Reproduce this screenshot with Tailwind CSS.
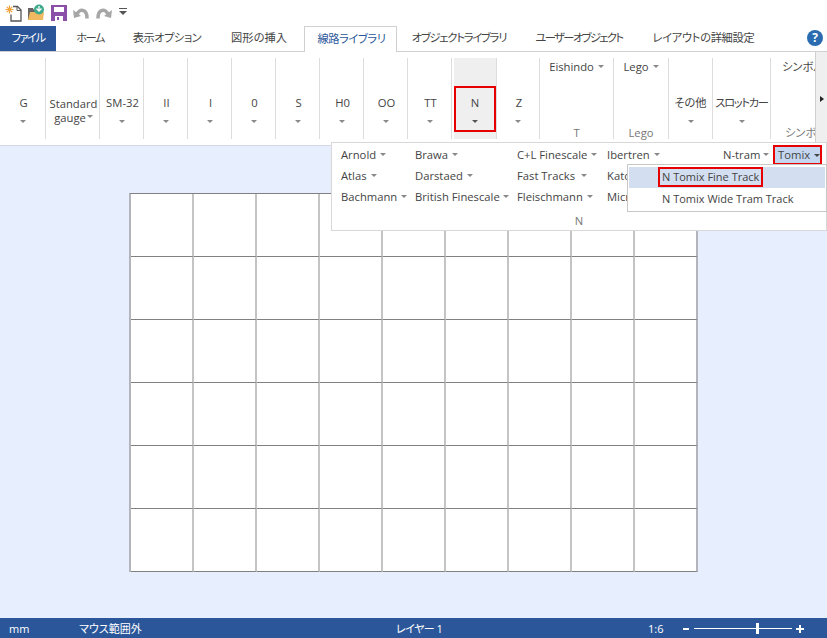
<!DOCTYPE html>
<html lang="ja">
<head>
    <meta charset="UTF-8">
    <title>線路ライブラリ</title>
    <script src="https://cdn.jsdelivr.net/npm/@tailwindcss/browser@4"></script>
</head>
<body class="bg-white">
<div class="relative w-[827px] h-[638px] overflow-hidden flex flex-col bg-white text-[11.25px] text-[#444] [font-feature-settings:'palt'] font-['Open_Sans','Noto_Sans_CJK_JP',sans-serif]">

    <!-- quick access -->
    <div class="h-[26px] flex items-center pl-[5px]">
        <svg width="17" height="17" viewBox="0 0 17 17" fill="none">
            <path d="M8 1.500h4.500l3.500 3.500v11H6V9.500" stroke="#555" stroke-width="1.300"/>
            <path d="M12 1.500v4h4" stroke="#555"/>
            <path d="M4.500 0.500v8M0.500 4.500h8M1.800 1.800l5.400 5.400M7.200 1.800L1.800 7.200" stroke="#f0a23c" stroke-width="1.200"/>
        </svg>
        <svg width="18" height="18" viewBox="0 0 18 18" class="ml-[5px]">
            <path d="M1 4h5l1 2h2v10H1z" fill="#666"/>
            <path d="M3 8h14l-1 8H1z" fill="#f0b860"/>
            <circle cx="12" cy="5.500" r="5" fill="#3fa98c"/>
            <path d="M9.500 4.500l2.500 2.500 2.500-2.500M12 2v5" stroke="#fff" stroke-width="1.300" fill="none"/>
        </svg>
        <svg width="16" height="16" viewBox="0 0 16 16" class="ml-[6px]">
            <path d="M0 0h16v16H0z" fill="#8a4fa8"/>
            <path d="M3 2h10v5H3z" fill="#fff"/>
            <path d="M4 11h8v5H4z" fill="#fff"/>
            <path d="M6 12h2v3H6z" fill="#8a4fa8"/>
        </svg>
        <svg width="16" height="13" viewBox="0 0 16 13" fill="none" class="ml-[6px] mt-[1px]">
            <path d="M4 8C5 4 8 3 10 3.500c3 .5 4 3 4 8" stroke="#a6a6a6" stroke-width="3.500"/>
            <path d="M0 3l1 8 7-2z" fill="#a6a6a6"/>
        </svg>
        <svg width="16" height="13" viewBox="0 0 16 13" fill="none" class="ml-[7px] mt-[1px]">
            <path d="M12 8C11 4 8 3 6 3.500c-3 .5-4 3-4 8" stroke="#a6a6a6" stroke-width="3.500"/>
            <path d="M16 3l-1 8-7-2z" fill="#a6a6a6"/>
        </svg>
        <svg width="8" height="7" viewBox="0 0 8 7" class="ml-[7px] -mt-[3px]">
            <path d="M0 0h8v1H0z" fill="#555"/>
            <path d="M0 3h8L4 7z" fill="#555"/>
        </svg>
    </div>

    <!-- tabs -->
    <div class="relative h-[26px] flex border-b border-[#d0d0d0] whitespace-nowrap">
        <div class="w-[56px] h-[25px] bg-[#2b579a] text-white tracking-[-1.5px] flex items-center justify-center">ファイル</div>
        <div class="w-[68px] h-[25px] tracking-[-1.5px] flex items-center justify-center">ホーム</div>
        <div class="w-[86px] h-[25px] tracking-[-0.5px] flex items-center justify-center">表示オプション</div>
        <div class="w-[94px] h-[25px] pl-[4px] flex items-center justify-center">図形の挿入</div>
        <div class="w-[93px] h-[26px] pl-[2px] bg-white border border-b-0 border-[#d0d0d0] text-[#2b579a] tracking-[-0.4px] flex items-center justify-center">線路ライブラリ</div>
        <div class="w-[124px] h-[25px] tracking-[-1.2px] flex items-center justify-center">オブジェクトライブラリ</div>
        <div class="w-[116px] h-[25px] tracking-[-1.6px] flex items-center justify-center">ユーザーオブジェクト</div>
        <div class="w-[133px] h-[25px] tracking-[-0.3px] flex items-center justify-center">レイアウトの詳細設定</div>
        <div class="absolute right-[4px] top-[4px] w-[16px] h-[16px] rounded-full bg-[#2b6cb0] text-white text-[12px] font-bold flex items-center justify-center">?</div>
    </div>

    <!-- ribbon -->
    <div class="relative h-[94px] flex pt-[6px] border-b border-[#d4d8e4] bg-white whitespace-nowrap">
        <div class="w-[46px] h-[81px] border-r border-[#dcdcdc] flex flex-col items-center pt-[37px] indent-[2px]">G<span class="mt-[8px] w-0 h-0 border-x-[3px] border-t-[3px] border-x-transparent border-t-[#888]"></span></div>
        <div class="w-[54px] h-[81px] border-r border-[#dcdcdc] flex flex-col items-center pt-[39px] leading-[14px] indent-[2px]">
            <span>Standard</span>
            <span>gauge<span class="inline-block ml-[1px] mb-[4px] w-0 h-0 border-x-[3px] border-t-[3px] border-x-transparent border-t-[#888]"></span></span>
        </div>
        <div class="w-[44px] h-[81px] border-r border-[#dcdcdc] flex flex-col items-center pt-[37px] indent-[2px]">SM-32<span class="mt-[8px] w-0 h-0 border-x-[3px] border-t-[3px] border-x-transparent border-t-[#888]"></span></div>
        <div class="w-[44px] h-[81px] border-r border-[#dcdcdc] flex flex-col items-center pt-[37px] indent-[2px]">II<span class="mt-[8px] w-0 h-0 border-x-[3px] border-t-[3px] border-x-transparent border-t-[#888]"></span></div>
        <div class="w-[44px] h-[81px] border-r border-[#dcdcdc] flex flex-col items-center pt-[37px] indent-[2px]">I<span class="mt-[8px] w-0 h-0 border-x-[3px] border-t-[3px] border-x-transparent border-t-[#888]"></span></div>
        <div class="w-[44px] h-[81px] border-r border-[#dcdcdc] flex flex-col items-center pt-[37px] indent-[2px]">0<span class="mt-[8px] w-0 h-0 border-x-[3px] border-t-[3px] border-x-transparent border-t-[#888]"></span></div>
        <div class="w-[44px] h-[81px] border-r border-[#dcdcdc] flex flex-col items-center pt-[37px] indent-[2px]">S<span class="mt-[8px] w-0 h-0 border-x-[3px] border-t-[3px] border-x-transparent border-t-[#888]"></span></div>
        <div class="w-[44px] h-[81px] border-r border-[#dcdcdc] flex flex-col items-center pt-[37px] indent-[2px]">H0<span class="mt-[8px] w-0 h-0 border-x-[3px] border-t-[3px] border-x-transparent border-t-[#888]"></span></div>
        <div class="w-[44px] h-[81px] border-r border-[#dcdcdc] flex flex-col items-center pt-[37px] indent-[2px]">OO<span class="mt-[8px] w-0 h-0 border-x-[3px] border-t-[3px] border-x-transparent border-t-[#888]"></span></div>
        <div class="w-[44px] h-[81px] border-r border-[#dcdcdc] flex flex-col items-center pt-[37px] indent-[2px]">TT<span class="mt-[8px] w-0 h-0 border-x-[3px] border-t-[3px] border-x-transparent border-t-[#888]"></span></div>
        <div class="w-[45px] h-[81px] border-r border-[#dcdcdc] pl-[2px]">
            <div class="w-[42px] h-[81px] bg-[#efefef] flex flex-col items-center pt-[37px]">N<span class="mt-[8px] w-0 h-0 border-x-[3px] border-t-[3px] border-x-transparent border-t-[#555]"></span></div>
        </div>
        <div class="w-[43px] h-[81px] border-r border-[#dcdcdc] flex flex-col items-center pt-[37px] indent-[2px]">Z<span class="mt-[8px] w-0 h-0 border-x-[3px] border-t-[3px] border-x-transparent border-t-[#888]"></span></div>
        <div class="w-[74px] h-[81px] border-r border-[#dcdcdc] flex flex-col items-center pt-[1px]">
            <span>Eishindo<span class="inline-block ml-[4px] mb-[3px] w-0 h-0 border-x-[3px] border-t-[3px] border-x-transparent border-t-[#888]"></span></span>
            <span class="mt-auto -mb-[3px] text-[#777]">T</span>
        </div>
        <div class="w-[55px] h-[81px] border-r border-[#dcdcdc] flex flex-col items-center pt-[1px]">
            <span>Lego<span class="inline-block ml-[4px] mb-[3px] w-0 h-0 border-x-[3px] border-t-[3px] border-x-transparent border-t-[#888]"></span></span>
            <span class="mt-auto -mb-[3px] text-[#777]">Lego</span>
        </div>
        <div class="w-[44px] h-[81px] border-r border-[#dcdcdc] flex flex-col items-center pt-[37px]">その他<span class="mt-[8px] w-0 h-0 border-x-[3px] border-t-[3px] border-x-transparent border-t-[#888]"></span></div>
        <div class="w-[58px] h-[81px] border-r border-[#dcdcdc] flex flex-col items-center pt-[37px] tracking-[-1.3px]">スロットカー<span class="mt-[8px] w-0 h-0 border-x-[3px] border-t-[3px] border-x-transparent border-t-[#888]"></span></div>
        <div class="w-[45px] h-[81px] flex flex-col pl-[11px] pt-[1px]">
            <span>シンボル</span>
            <span class="mt-auto -mb-[3px] ml-[3px] text-[#777]">シンボル</span>
        </div>
        <div class="absolute right-0 top-0 w-[12px] h-[93px] bg-[#efefef] border-l border-[#d0d0d0] flex items-center justify-center">
            <span class="w-0 h-0 border-y-[3px] border-l-[4px] border-y-transparent border-l-[#222]"></span>
        </div>
        <div class="absolute left-[454px] top-[34px] w-[42px] h-[46px] border-[2px] border-[#e60000]"></div>
    </div>

    <!-- drawing area -->
    <div class="flex-1 bg-[#e7eefe] pt-[47px] pl-[129px]">
        <div class="grid grid-cols-[repeat(9,63px)] grid-rows-[repeat(6,63px)] w-[569px] h-[379px] bg-white border-l-2 border-l-[#b4b4bc] border-t border-t-[#808080] [&>div]:border-r-2 [&>div]:border-r-[#c4c4c4] [&>div]:border-b [&>div]:border-b-[#808080] [&>div:nth-child(9n)]:border-r-[#b4b4bc]">
            <div></div><div></div><div></div><div></div><div></div><div></div><div></div><div></div><div></div>
            <div></div><div></div><div></div><div></div><div></div><div></div><div></div><div></div><div></div>
            <div></div><div></div><div></div><div></div><div></div><div></div><div></div><div></div><div></div>
            <div></div><div></div><div></div><div></div><div></div><div></div><div></div><div></div><div></div>
            <div></div><div></div><div></div><div></div><div></div><div></div><div></div><div></div><div></div>
            <div></div><div></div><div></div><div></div><div></div><div></div><div></div><div></div><div></div>
        </div>
    </div>

    <!-- status bar -->
    <div class="relative h-[20px] bg-[#2b579a] text-white text-[11px] flex items-center">
        <span class="w-[79px] pl-[9px] mt-[2px]">mm</span>
        <span class="w-[317px] mt-[2px]">マウス範囲外</span>
        <span class="w-[252px] mt-[2px] tracking-[-0.5px]">レイヤー 1</span>
        <span class="w-[35px] mt-[2px]">1:6</span>
        <span class="w-[6px] h-[2px] bg-white mt-[2px]"></span>
        <div class="relative ml-[5px] w-[98px] h-[1px] bg-white">
            <span class="absolute left-[62px] -top-[5px] w-[3px] h-[11px] bg-white"></span>
        </div>
        <span class="relative ml-[4px] w-[8px] h-[2px] bg-white mt-[2px]"><span class="absolute left-[3px] -top-[3px] w-[2px] h-[8px] bg-white"></span></span>
    </div>

    <!-- N group dropdown -->
    <div class="absolute left-[331px] top-[142px] w-[496px] h-[89px] bg-white border border-[#d8d8d8]">
        <div class="flex pl-[9px] pt-[1px] leading-[21px] whitespace-nowrap">
            <div class="w-[74px]">
                <div>Arnold<span class="inline-block ml-[4px] mb-[3px] w-0 h-0 border-x-[3px] border-t-[3px] border-x-transparent border-t-[#888]"></span></div>
                <div>Atlas<span class="inline-block ml-[4px] mb-[3px] w-0 h-0 border-x-[3px] border-t-[3px] border-x-transparent border-t-[#888]"></span></div>
                <div>Bachmann<span class="inline-block ml-[4px] mb-[3px] w-0 h-0 border-x-[3px] border-t-[3px] border-x-transparent border-t-[#888]"></span></div>
            </div>
            <div class="w-[102px]">
                <div>Brawa<span class="inline-block ml-[4px] mb-[3px] w-0 h-0 border-x-[3px] border-t-[3px] border-x-transparent border-t-[#888]"></span></div>
                <div>Darstaed<span class="inline-block ml-[4px] mb-[3px] w-0 h-0 border-x-[3px] border-t-[3px] border-x-transparent border-t-[#888]"></span></div>
                <div>British Finescale<span class="inline-block ml-[3px] mb-[3px] w-0 h-0 border-x-[3px] border-t-[3px] border-x-transparent border-t-[#888]"></span></div>
            </div>
            <div class="w-[90px]">
                <div>C+L Finescale<span class="inline-block ml-[4px] mb-[3px] w-0 h-0 border-x-[3px] border-t-[3px] border-x-transparent border-t-[#888]"></span></div>
                <div>Fast Tracks<span class="inline-block ml-[6px] mb-[3px] w-0 h-0 border-x-[3px] border-t-[3px] border-x-transparent border-t-[#888]"></span></div>
                <div>Fleischmann<span class="inline-block ml-[4px] mb-[3px] w-0 h-0 border-x-[3px] border-t-[3px] border-x-transparent border-t-[#888]"></span></div>
            </div>
            <div class="w-[116px]">
                <div>Ibertren<span class="inline-block ml-[4px] mb-[3px] w-0 h-0 border-x-[3px] border-t-[3px] border-x-transparent border-t-[#888]"></span></div>
                <div>Kato</div>
                <div>Micro</div>
            </div>
            <div class="w-[55px]">N-tram<span class="inline-block ml-[3px] mb-[3px] w-0 h-0 border-x-[3px] border-t-[3px] border-x-transparent border-t-[#888]"></span></div>
        </div>
        <div class="absolute left-0 right-0 bottom-0 text-center text-[#777]">N</div>
        <div class="absolute left-[441px] top-[2px] w-[49px] h-[20px] pl-[3px] bg-[#c5d7f0] border-[2px] border-[#e60000] flex items-center">Tomix<span class="inline-block ml-[4px] w-0 h-0 border-x-[3px] border-t-[3px] border-x-transparent border-t-[#444]"></span></div>
    </div>

    <!-- Tomix submenu -->
    <div class="absolute left-[627px] top-[164px] w-[200px] h-[48px] bg-white border border-[#c8c8c8] pt-[2px] px-[1px] text-[11px]">
        <div class="h-[21px] bg-[#d3dff1] pl-[33px] flex items-center">N Tomix Fine Track</div>
        <div class="h-[22px] pl-[33px] flex items-center">N Tomix Wide Tram Track</div>
        <div class="absolute left-[30px] top-[2px] w-[105px] h-[20px] border-[2px] border-[#e60000]"></div>
    </div>
</div>
</body>
</html>
